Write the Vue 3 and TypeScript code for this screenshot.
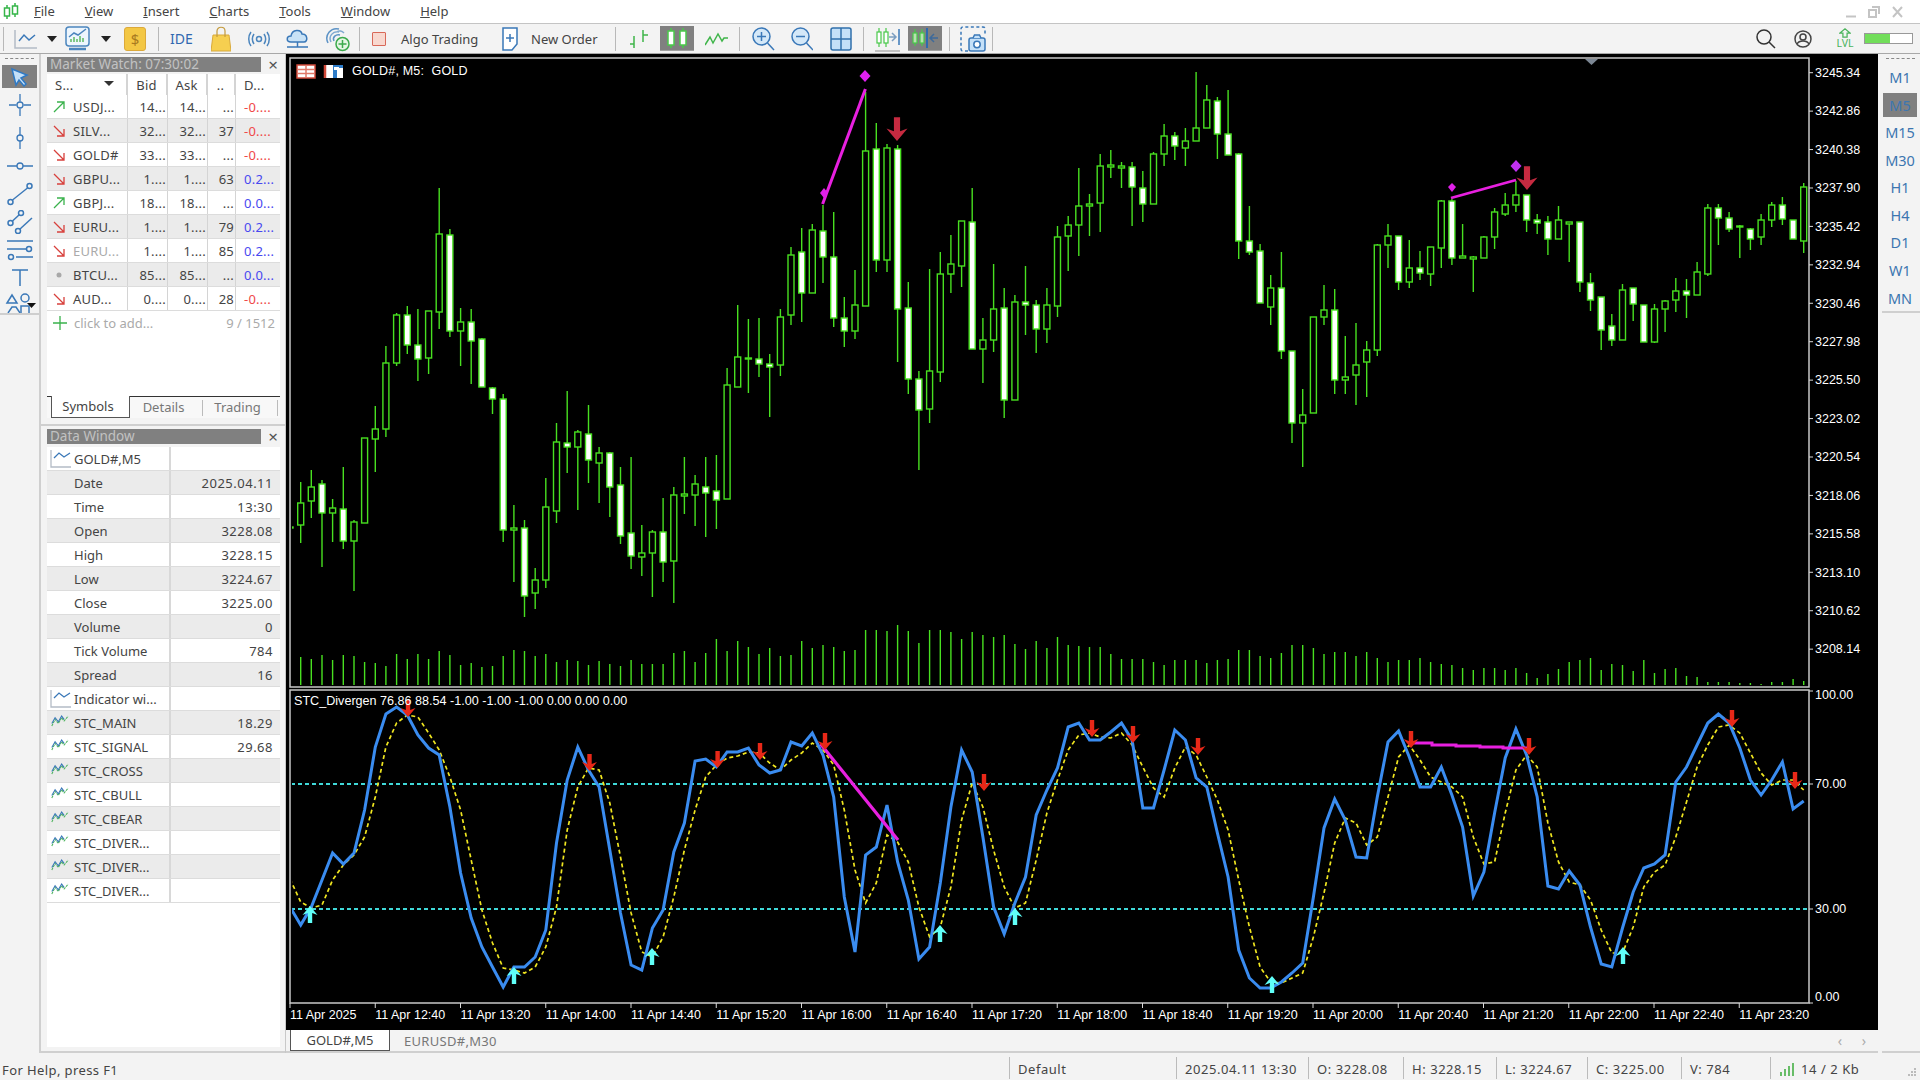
<template>
  <div class="app">
    <header class="menubar">
      <svg class="logo" width="16" height="20" viewBox="0 0 16 20" fill="none" stroke="#35b548" stroke-width="1.5">
        <path d="M4 3V17M12 1V15" />
        <rect x="1.5" y="6" width="5" height="8" fill="#fff" />
        <rect x="9.5" y="4" width="5" height="8" fill="#fff" />
      </svg>
      <nav class="menu">
        <span v-for="m in menu" :key="m.rest"><u>{{ m.key }}</u>{{ m.rest }}</span>
      </nav>
      <div class="winctl">
        <svg width="70" height="20" viewBox="0 0 70 20" fill="none" stroke="#c4c4c4" stroke-width="2">
          <path d="M2 14.5H12" />
          <rect x="25" y="8" width="7" height="7" />
          <path d="M28 5H35V12" />
          <path d="M49 5L58 15M58 5L49 15" />
        </svg>
      </div>
    </header>

    <div class="toolbar">
      <i class="sep m3"></i>
      <svg class="m10" width="23" height="24" viewBox="0 0 23 24" fill="none">
        <path d="M1 3V21H23" stroke="#b4bcc6" stroke-width="1.5" />
        <path d="M5 14L10 8L15 13L21 8" stroke="#3a78b8" stroke-width="1.5" />
      </svg>
      <svg class="m10" width="10" height="6" viewBox="0 0 10 6"><path d="M0 0H10L5 6Z" fill="#222" /></svg>
      <svg class="m8" width="25" height="26" viewBox="0 0 25 26" fill="none">
        <rect x="1" y="1" width="23" height="19" rx="3" fill="#eef6fd" stroke="#4c86be" stroke-width="1.5" />
        <path d="M6 16V13M9 16V11M12 16V13M15 16V10M18 16V12" stroke="#5dbb63" stroke-width="1.5" />
        <path d="M4 11L9 7L13 9L21 3" stroke="#4c86be" stroke-width="1.5" />
        <path d="M4 23H21" stroke="#4c86be" stroke-width="2.5" />
      </svg>
      <svg class="m11" width="10" height="6" viewBox="0 0 10 6"><path d="M0 0H10L5 6Z" fill="#222" /></svg>
      <span class="dollar m13">$</span>
      <i class="sep m12"></i>
      <span class="ide m11">IDE</span>
      <svg class="m18" width="20" height="26" viewBox="0 0 20 26" fill="none">
        <path d="M2 9H18L20 25H0Z" fill="#f6cf50" stroke="#d8a93a" />
        <path d="M6 11V5C6 0 14 0 14 5V11" stroke="#c49a3c" stroke-width="1.200" />
      </svg>
      <svg class="m17" width="22" height="16" viewBox="0 0 22 16" fill="none" stroke="#4c86be" stroke-width="1.5">
        <circle cx="11" cy="8" r="2.5" />
        <path d="M6 3C4 6 4 10 6 13M16 3C18 6 18 10 16 13M3 1C0 5 0 11 3 15M19 1C22 5 22 11 19 15" />
      </svg>
      <svg class="m16" width="23" height="24" viewBox="0 0 23 24" fill="none">
        <path d="M5 15C0 15 0 9 5 9C6 2 15 2 16 7C22 7 22 15 18 15Z" fill="#c8e2f6" stroke="#3a78b8" stroke-width="1.5" />
        <path d="M11.500 15V20M1 20H22" stroke="#3a78b8" stroke-width="1.5" />
      </svg>
      <svg class="m16" width="25" height="26" viewBox="0 0 25 26" fill="none">
        <path d="M3 17C-1 9 6 1 14 3" stroke="#5d93c6" stroke-width="1.5" />
        <path d="M6 16C3 10 8 5 14 6M19 7C17 5 14 4 12 6" stroke="#7fa9d0" stroke-width="1.5" />
        <path d="M9 15C7 11 11 8 15 9" stroke="#5d93c6" stroke-width="1.5" />
        <circle cx="17.500" cy="18" r="6.500" fill="#e4f6e4" stroke="#3caa4c" stroke-width="1.5" />
        <path d="M17.500 14V22M13.500 18H21.500" stroke="#3caa4c" stroke-width="1.5" />
      </svg>
      <i class="sep m9"></i>
      <span class="algo-box m12"></span>
      <span class="tb-text algo m15">Algo Trading</span>
      <svg class="m21" width="18" height="24" viewBox="0 0 18 24" fill="none">
        <path d="M2 1H16V17L11 23H2Z" fill="#fff" stroke="#3a78b8" stroke-width="1.5" />
        <path d="M9 7V15M5 11H13" stroke="#3a78b8" stroke-width="1.5" />
      </svg>
      <span class="tb-text order m12">New Order</span>
      <i class="sep m15"></i>
      <svg class="m12" width="22" height="24" viewBox="0 0 22 24" fill="none" stroke="#3fb54a" stroke-width="1.500">
        <path d="M6 9V21M2 17H6M15 3V15M15 8H20" />
      </svg>
      <span class="tb-active m10">
        <svg width="26" height="24" viewBox="0 0 26 24" fill="#fff" stroke="#49c94a" stroke-width="1.500">
          <path d="M7 2V22M19 2V22" />
          <rect x="4" y="5" width="6" height="14" />
          <rect x="16" y="5" width="6" height="14" />
        </svg>
      </span>
      <svg class="m11" width="23" height="14" viewBox="0 0 23 14" fill="none" stroke="#3fb54a" stroke-width="1.500">
        <path d="M0 13L5 5L8 11L13 2L17 9L19 6H23" />
      </svg>
      <i class="sep m11"></i>
      <svg class="m12" width="23" height="24" viewBox="0 0 23 24" fill="none" stroke="#3a78b8" stroke-width="1.500">
        <circle cx="9.500" cy="9.500" r="8.500" fill="#d4e8f8" />
        <path d="M15.500 16L22 23" />
        <path d="M9.500 5V14M5 9.500H14" />
      </svg>
      <svg class="m16" width="22" height="24" viewBox="0 0 22 24" fill="none" stroke="#3a78b8" stroke-width="1.500">
        <circle cx="9.500" cy="9.500" r="8.500" fill="#d4e8f8" />
        <path d="M15.500 16L22 23" />
        <path d="M5 9.500H14" />
      </svg>
      <svg class="m17" width="22" height="24" viewBox="0 0 22 24" fill="none">
        <rect x="1" y="1" width="20" height="22" rx="2" fill="#c4e0f8" stroke="#3070ac" stroke-width="1.500" />
        <path d="M11 1V23M1 12H21" stroke="#3070ac" stroke-width="1.500" />
      </svg>
      <i class="sep m11"></i>
      <svg class="m11" width="25" height="26" viewBox="0 0 25 26" fill="none">
        <path d="M4 2V21M11 2V21" stroke="#49c94a" stroke-width="1.200" />
        <rect x="2" y="6" width="4" height="11" fill="#fff" stroke="#49c94a" stroke-width="1.200" />
        <rect x="9" y="6" width="4" height="11" fill="#fff" stroke="#49c94a" stroke-width="1.200" />
        <path d="M14 11H21M17 7L21 11L17 15" stroke="#7c9ec0" stroke-width="1.500" />
        <path d="M24 3V19" stroke="#3a78b8" stroke-width="1.500" />
        <path d="M0 25H25" stroke="#b0b0b0" stroke-width="1.500" />
      </svg>
      <span class="tb-active m8">
        <svg width="26" height="22" viewBox="0 0 26 22" fill="none">
          <path d="M3 2V19M10 2V19" stroke="#49c94a" stroke-width="1.200" />
          <rect x="1" y="6" width="4" height="10" fill="#b8e0b0" stroke="#49c94a" stroke-width="1.200" />
          <rect x="8" y="6" width="4" height="10" fill="#b8e0b0" stroke="#49c94a" stroke-width="1.200" />
          <path d="M15 1V21" stroke="#2e6ab0" stroke-width="2" />
          <path d="M26 11H18M22 7L18 11L22 15" stroke="#3e6a9a" stroke-width="1.500" />
        </svg>
      </span>
      <i class="sep m7"></i>
      <svg class="m10" width="26" height="26" viewBox="0 0 26 26" fill="none">
        <path d="M8 25H3Q1 25 1 23V3Q1 1 3 1H23Q25 1 25 3V8" stroke="#3a78b8" stroke-width="1.500" stroke-dasharray="3 2.500" />
        <rect x="9" y="12" width="16" height="13" rx="2" fill="#c4e0f8" stroke="#3a78b8" stroke-width="1.500" />
        <path d="M13 12L14.500 9H19.500L21 12" fill="#c4e0f8" stroke="#3a78b8" stroke-width="1.500" />
        <circle cx="17" cy="18.500" r="3.200" fill="#fff" stroke="#3a78b8" stroke-width="1.500" />
      </svg>
      <i class="sep m6"></i>

      <div class="tb-right">
        <svg class="tb-search" width="22" height="20" viewBox="0 0 22 20" fill="none" stroke="#333" stroke-width="1.500">
          <circle cx="9" cy="8" r="7" />
          <path d="M14 13L20 19" />
        </svg>
        <svg class="m14" width="20" height="18" viewBox="0 0 20 18" fill="none" stroke="#444" stroke-width="1.500">
          <circle cx="10" cy="9" r="8" />
          <circle cx="10" cy="7" r="3" />
          <path d="M4 14C6 10 14 10 16 14" />
        </svg>
        <div class="lvl">
          <svg width="12" height="10" viewBox="0 0 14 12" fill="none" stroke="#4cb45c" stroke-width="1.500">
            <path d="M1 6L7 1L13 6H9.500V11H4.500V6Z" />
          </svg>
          <span>LVL</span>
        </div>
        <div class="meter m10"><div class="meter-fill"></div></div>
      </div>
    </div>

    <main class="main">
      <aside class="left-tools">
        <div class="grip"></div>
        <div class="lt-active">
          <svg width="20" height="20" viewBox="0 0 20 20"><path d="M2 2L17 8L11 11L16 17L14 19L9 13L6 18Z" fill="#c4e0f8" stroke="#2f79c4" stroke-width="1.500" /></svg>
        </div>
        <div class="lt-icons">
          <svg class="lt-first" width="24" height="24" viewBox="0 0 24 24" fill="none" stroke="#3a78b8" stroke-width="1.300"><path d="M12 1V8.500M12 15.500V23M1 12H8.500M15.500 12H23" /><circle cx="12" cy="12" r="3" /></svg>
          <svg width="24" height="24" viewBox="0 0 24 24" fill="none" stroke="#3a78b8" stroke-width="1.300"><path d="M12 1V9M12 15V23" /><circle cx="12" cy="12" r="3" /></svg>
          <svg width="26" height="24" viewBox="0 0 26 24" fill="none" stroke="#3a78b8" stroke-width="1.300"><path d="M0 12H10M16 12H26" /><circle cx="13" cy="12" r="3" /></svg>
          <svg width="26" height="24" viewBox="0 0 26 24" fill="none" stroke="#3a78b8" stroke-width="1.500"><circle cx="3.500" cy="20" r="2.500" /><circle cx="22.500" cy="4" r="2.500" /><path d="M5.500 18L20.500 6" /></svg>
          <svg width="26" height="24" viewBox="0 0 26 24" fill="none" stroke="#3a78b8" stroke-width="1.500"><circle cx="3.500" cy="13" r="2.500" /><circle cx="14" cy="3" r="2.500" /><path d="M5.500 11L12 5" /><circle cx="11" cy="21" r="2.500" /><path d="M13 19L25 8" /></svg>
          <svg width="26" height="24" viewBox="0 0 26 24" fill="none" stroke="#3a78b8" stroke-width="1.500"><path d="M0 3H26M0 11H19M9 19H26" /><circle cx="22" cy="11" r="2.500" /><circle cx="4" cy="19" r="2.500" /></svg>
          <svg width="20" height="24" viewBox="0 0 20 24" fill="none" stroke="#3a78b8" stroke-width="1.500"><path d="M2 4H18M10 4V20" /></svg>
          <svg class="shapes" width="34" height="21" viewBox="0 0 34 21" fill="none" stroke="#3a78b8" stroke-width="1.500"><path d="M4 11L9 3L14 11Z" /><circle cx="22" cy="6" r="4" /><path d="M5 21L9 15L13 15L17 21" /><rect x="18" y="14" width="8" height="9" /><path d="M24 11H33L28.500 16Z" fill="#111" stroke="none" /></svg>
        </div>
        <div class="lt-rule"></div>
      </aside>

      <section class="panels">
        <div class="panel market">
          <div class="titlebar">
            <span class="title">Market Watch: 07:30:02</span>
            <span class="close">×</span>
          </div>
          <div class="mw-body">
            <div class="mw-row mw-head">
              <span class="c-sym head-sym">S...<em class="sort"></em></span>
              <span class="c-num c-center">Bid</span>
              <span class="c-num c-center">Ask</span>
              <span class="c-num c-center">..</span>
              <span class="c-chg">D...</span>
            </div>
            <div v-for="(q, i) in quotes" :key="i" class="mw-row" :class="{ alt: i % 2 === 1 }">
              <span class="c-sym" :class="{ dim: q.dim }">
                <svg v-if="q.dir === 'up'" width="12" height="12" viewBox="0 0 12 12" fill="none" stroke="#3ab24c" stroke-width="1.300"><path d="M1 11L11 1M4 1H11V8" /></svg>
                <svg v-else-if="q.dir === 'down'" width="12" height="12" viewBox="0 0 12 12" fill="none" stroke="#d8403c" stroke-width="1.300"><path d="M1 1L11 11M4 11H11V4" /></svg>
                <svg v-else width="12" height="12" viewBox="0 0 12 12"><circle cx="6" cy="6" r="2.500" fill="#a8a8a8" /></svg>
                <b>{{ q.sym }}</b>
              </span>
              <span class="c-num">{{ q.bid }}</span>
              <span class="c-num">{{ q.ask }}</span>
              <span class="c-num">{{ q.spread }}</span>
              <span class="c-chg" :class="q.neg ? 'neg' : 'pos'">{{ q.chg }}</span>
            </div>
            <div class="mw-add">
              <svg width="14" height="14" viewBox="0 0 14 14" fill="none" stroke="#3ab24c" stroke-width="1.300"><path d="M7 0V14M0 7H14" /></svg>
              <span class="add-text">click to add...</span>
              <span class="add-count">9 / 1512</span>
            </div>
            <div class="mw-tabs">
              <span class="mw-tab on">Symbols</span>
              <span class="mw-tab t-details">Details</span>
              <span class="mw-tab t-trading">Trading</span>
            </div>
          </div>
        </div>

        <div class="panel data">
          <div class="titlebar">
            <span class="title">Data Window</span>
            <span class="close">×</span>
          </div>
          <div class="dw-body">
            <div v-for="(r, i) in dataRows" :key="i" class="dw-row" :class="{ alt: i % 2 === 1 }">
              <span class="dw-name">
                <svg v-if="r.icon === 'chart'" class="dw-ic" width="22" height="20" viewBox="0 0 22 20" fill="none">
                  <path d="M1 1V18H21" stroke="#b4bcc6" stroke-width="1.300" />
                  <path d="M4 9L9 4L14 8L20 4" stroke="#3a78b8" stroke-width="1.300" />
                </svg>
                <svg v-else-if="r.icon === 'ind'" class="dw-ic dw-ind" width="18" height="14" viewBox="0 0 22 16" fill="none" stroke-width="1.300">
                  <path d="M1 14L5 6L9 11L13 4L16 8L21 2" stroke="#4cb45c" stroke-dasharray="3 1" />
                  <path d="M1 11L5 4L9 9L13 2L16 6" stroke="#3a78b8" />
                </svg>
                <b>{{ r.name }}</b>
              </span>
              <span class="dw-val">{{ r.value }}</span>
            </div>
          </div>
        </div>
      </section>

      <section class="chart-col">
        <div class="chart">
          <svg class="chart-svg" width="1592" height="976" viewBox="286 54 1592 976">
            <defs>
              <clipPath id="plot-main"><rect x="292" y="60" width="1516" height="626" /></clipPath>
              <clipPath id="plot-sub"><rect x="292" y="692" width="1516" height="310" /></clipPath>
            </defs>

            <rect x="290" y="58" width="1519" height="629" fill="none" stroke="#c8c8c8" stroke-width="1.500" />
            <rect x="290" y="690" width="1519" height="313" fill="none" stroke="#c8c8c8" stroke-width="1.500" />

            <!-- main window: volumes, candles -->
            <g clip-path="url(#plot-main)">
              <path :d="volumePath" stroke="#48e020" stroke-width="1.400" fill="none" />
              <g v-for="c in candles" :key="c.x">
                <path :d="`M${c.x} ${c.h}V${c.l}`" stroke="#48e020" stroke-width="1.400" />
                <rect :x="c.x - 3" :y="c.t" width="6" :height="Math.max(c.b - c.t, 1)" :fill="c.fill" stroke="#48e020" stroke-width="1.400" />
              </g>
            </g>
            <path d="M822.600 204L865.400 89" stroke="#e820e0" stroke-width="3" />
            <path d="M1451 198L1516 180" stroke="#e820e0" stroke-width="2.800" />
            <path d="M865 70L870.500 76L865 82L859.500 76Z" fill="#e020f0" />
            <path d="M824 188L828 193L824 198L820 193Z" fill="#e020e8" />
            <path d="M1516 160L1521.500 166L1516 172L1510.500 166Z" fill="#c030f0" />
            <path d="M1452 183L1456 187L1452 192L1448 187Z" fill="#e020e8" />
            <polygon :points="arrow(897, 141, -1, 1.400)" fill="#c62a40" />
            <polygon :points="arrow(1527, 190, -1, 1.400)" fill="#c62a40" />
            <path d="M1585 59H1598L1591.500 65Z" fill="#7c8794" />

            <rect x="297" y="65" width="18" height="13" fill="#fff" stroke="#d04838" stroke-width="1.500" />
            <path d="M297 69.500H315M297 73.500H315M306 65V78" stroke="#e07868" stroke-width="1.500" />
            <rect x="325" y="65" width="18" height="13" fill="#2e7cc8" />
            <path d="M325 65H333V78H325ZM337 68H343V78H337Z" fill="#fff" />
            <path d="M325 65V78" stroke="#d04838" stroke-width="2.500" />
            <rect x="334" y="67" width="5" height="3" fill="#fff" />
            <text x="352" y="75" class="chart-txt head">GOLD#, M5:&nbsp; GOLD</text>

            <g v-for="(p, i) in prices" :key="p">
              <path :d="`M1809 ${72.700 + i * 38.430}H1813`" stroke="#d8d8d8" />
              <text x="1815" :y="77 + i * 38.430" class="chart-txt">{{ p }}</text>
            </g>

            <!-- indicator window -->
            <g clip-path="url(#plot-sub)">
              <path d="M291 784H1809M291 909H1809" stroke="#3fd8d8" stroke-width="2" stroke-dasharray="4 3" />
              <polyline :points="signalPts" fill="none" stroke="#f0e620" stroke-width="1.700" stroke-dasharray="4 3" />
              <polyline :points="mainPts" fill="none" stroke="#3a8cf0" stroke-width="3" />
            </g>
            <path d="M820.600 744L898 840" stroke="#e820e0" stroke-width="3.200" />
            <path d="M1408 743H1432V745H1456V746H1480V747H1503V748H1527" stroke="#e820e0" stroke-width="3" fill="none" />
            <polygon v-for="a in downArrows" :key="a[0]" :points="arrow(a[0], a[1], -1, 1)" fill="#e82818" />
            <polygon v-for="a in upArrows" :key="a[0]" :points="arrow(a[0], a[1], 1, 1)" fill="#60fff8" />

            <text x="294" y="705" class="chart-txt sub-name">STC_Divergen 76.86 88.54 -1.00 -1.00 -1.00 0.00 0.00 0.00</text>
            <g v-for="t in subTicks" :key="t.label">
              <path :d="`M1809 ${t.tick}H1813`" stroke="#d8d8d8" />
              <text x="1815" :y="t.y" class="chart-txt">{{ t.label }}</text>
            </g>

            <g v-for="(l, i) in timeLabels" :key="l">
              <path :d="`M${290 + i * 85.250} 1003V1008`" stroke="#d8d8d8" />
              <text :x="290 + i * 85.250" y="1019" class="chart-txt">{{ l }}</text>
            </g>
          </svg>
        </div>
        <div class="chart-tabs">
          <span class="c-tab on">GOLD#,M5</span>
          <span class="c-tab c-tab-next">EURUSD#,M30</span>
          <span class="c-scroll">‹</span>
          <span class="c-scroll c-scroll-r">›</span>
        </div>
      </section>

      <aside class="right-tools">
        <div class="grip"></div>
        <span v-for="p in periods" :key="p" class="period" :class="{ on: p === 'M5' }">{{ p }}</span>
        <div class="rt-fill"></div>
      </aside>
    </main>

    <footer class="statusbar">
      <span class="st-help">For Help, press F1</span>
      <span class="st st-default">Default</span>
      <span class="st st-time">2025.04.11 13:30</span>
      <span class="st st-o">O: 3228.08</span>
      <span class="st st-h">H: 3228.15</span>
      <span class="st st-l">L: 3224.67</span>
      <span class="st st-c">C: 3225.00</span>
      <span class="st st-v">V: 784</span>
      <span class="st st-net">
        <svg width="18" height="16" viewBox="0 0 18 16" fill="none" stroke="#45b045" stroke-width="1.600">
          <path d="M2 15V11M6 15V8M10 15V5M14 15V2" />
        </svg>
        14 / 2 Kb
      </span>
      <svg class="st-grip" width="10" height="10" viewBox="0 0 10 10" fill="#bbb">
        <rect x="7" y="1" width="2" height="2" /><rect x="4" y="4" width="2" height="2" /><rect x="7" y="4" width="2" height="2" />
        <rect x="1" y="7" width="2" height="2" /><rect x="4" y="7" width="2" height="2" /><rect x="7" y="7" width="2" height="2" />
      </svg>
    </footer>
  </div>
</template>

<script setup lang="ts">
import { computed } from 'vue'

const menu = [
  { key: 'F', rest: 'ile' },
  { key: 'V', rest: 'iew' },
  { key: 'I', rest: 'nsert' },
  { key: 'C', rest: 'harts' },
  { key: 'T', rest: 'ools' },
  { key: 'W', rest: 'indow' },
  { key: 'H', rest: 'elp' }
]

interface Quote {
  dir: 'up' | 'down' | 'none'
  sym: string
  bid: string
  ask: string
  spread: string
  chg: string
  neg: boolean
  dim?: boolean
}

const quotes: Quote[] = [
  { dir: 'up', sym: 'USDJ...', bid: '14...', ask: '14...', spread: '...', chg: '-0....', neg: true },
  { dir: 'down', sym: 'SILV...', bid: '32...', ask: '32...', spread: '37', chg: '-0....', neg: true },
  { dir: 'down', sym: 'GOLD#', bid: '33...', ask: '33...', spread: '...', chg: '-0....', neg: true },
  { dir: 'down', sym: 'GBPU...', bid: '1....', ask: '1....', spread: '63', chg: '0.2...', neg: false },
  { dir: 'up', sym: 'GBPJ...', bid: '18...', ask: '18...', spread: '...', chg: '0.0...', neg: false },
  { dir: 'down', sym: 'EURU...', bid: '1....', ask: '1....', spread: '79', chg: '0.2...', neg: false },
  { dir: 'down', sym: 'EURU...', bid: '1....', ask: '1....', spread: '85', chg: '0.2...', neg: false, dim: true },
  { dir: 'none', sym: 'BTCU...', bid: '85...', ask: '85...', spread: '...', chg: '0.0...', neg: false },
  { dir: 'down', sym: 'AUD...', bid: '0....', ask: '0....', spread: '28', chg: '-0....', neg: true }
]

const dataRows = [
  { name: 'GOLD#,M5', value: '', icon: 'chart' },
  { name: 'Date', value: '2025.04.11' },
  { name: 'Time', value: '13:30' },
  { name: 'Open', value: '3228.08' },
  { name: 'High', value: '3228.15' },
  { name: 'Low', value: '3224.67' },
  { name: 'Close', value: '3225.00' },
  { name: 'Volume', value: '0' },
  { name: 'Tick Volume', value: '784' },
  { name: 'Spread', value: '16' },
  { name: 'Indicator wi...', value: '', icon: 'chart' },
  { name: 'STC_MAIN', value: '18.29', icon: 'ind' },
  { name: 'STC_SIGNAL', value: '29.68', icon: 'ind' },
  { name: 'STC_CROSS', value: '', icon: 'ind' },
  { name: 'STC_CBULL', value: '', icon: 'ind' },
  { name: 'STC_CBEAR', value: '', icon: 'ind' },
  { name: 'STC_DIVER...', value: '', icon: 'ind' },
  { name: 'STC_DIVER...', value: '', icon: 'ind' },
  { name: 'STC_DIVER...', value: '', icon: 'ind' }
]

const periods = ['M1', 'M5', 'M15', 'M30', 'H1', 'H4', 'D1', 'W1', 'MN']

const prices = [
  '3245.34', '3242.86', '3240.38', '3237.90', '3235.42', '3232.94', '3230.46', '3227.98',
  '3225.50', '3223.02', '3220.54', '3218.06', '3215.58', '3213.10', '3210.62', '3208.14'
]

const subTicks = [
  { label: '100.00', tick: 691, y: 699 },
  { label: '70.00', tick: 784, y: 788 },
  { label: '30.00', tick: 909, y: 913 },
  { label: '0.00', tick: 1003, y: 1001 }
]

const timeLabels = [
  '11 Apr 2025', '11 Apr 12:40', '11 Apr 13:20', '11 Apr 14:00', '11 Apr 14:40', '11 Apr 15:20',
  '11 Apr 16:00', '11 Apr 16:40', '11 Apr 17:20', '11 Apr 18:00', '11 Apr 18:40', '11 Apr 19:20',
  '11 Apr 20:00', '11 Apr 20:40', '11 Apr 21:20', '11 Apr 22:00', '11 Apr 22:40', '11 Apr 23:20'
]

const BAR = 10.66
const barX = (i: number) => 290 + BAR * i

// screen y of high, body top, body bottom, low; 1 = white body (down bar)
const ohlc: number[][] = [
  [527, 527, 528, 530, 0], [482, 503, 525, 543, 0], [470, 487, 501, 518, 0], [480, 484, 513, 567, 1], [499, 508, 513, 542, 0],
  [467, 509, 541, 549, 1], [520, 522, 541, 591, 0], [438, 438, 523, 523, 0], [406, 429, 439, 472, 0], [346, 363, 429, 437, 0],
  [313, 315, 363, 366, 0], [306, 315, 345, 354, 1], [309, 345, 359, 381, 1], [311, 311, 358, 374, 0], [188, 234, 312, 329, 0],
  [229, 235, 331, 337, 1], [308, 322, 331, 366, 0], [309, 322, 341, 384, 1], [338, 339, 387, 387, 1], [387, 388, 399, 414, 1],
  [394, 399, 530, 542, 1], [505, 528, 530, 582, 0], [520, 528, 596, 617, 1], [568, 580, 593, 609, 0], [478, 507, 580, 588, 0],
  [423, 442, 511, 523, 0], [391, 443, 447, 473, 1], [430, 432, 447, 510, 0], [405, 434, 460, 483, 1], [447, 453, 463, 503, 0],
  [452, 453, 487, 517, 1], [467, 485, 536, 544, 1], [457, 533, 556, 569, 1], [525, 553, 557, 576, 0], [530, 532, 553, 597, 0],
  [498, 532, 562, 582, 1], [487, 495, 561, 603, 0], [457, 494, 496, 514, 0], [475, 484, 495, 526, 0], [457, 487, 493, 537, 1],
  [455, 491, 500, 529, 1], [368, 385, 499, 499, 0], [305, 357, 387, 387, 0], [319, 358, 359, 393, 0], [318, 359, 364, 377, 1],
  [354, 364, 367, 417, 1], [309, 317, 365, 376, 0], [247, 255, 315, 325, 0], [228, 252, 293, 322, 1], [224, 230, 293, 293, 0],
  [205, 231, 257, 283, 1], [212, 257, 318, 327, 1], [297, 318, 331, 347, 1], [270, 305, 331, 339, 0], [92, 151, 306, 306, 0],
  [123, 149, 260, 272, 1], [144, 148, 260, 272, 0], [145, 149, 309, 362, 1], [282, 308, 379, 394, 1], [371, 379, 410, 470, 1],
  [269, 371, 409, 423, 0], [252, 274, 372, 382, 0], [235, 264, 274, 293, 0], [221, 221, 266, 287, 0], [188, 222, 349, 349, 1],
  [318, 340, 349, 383, 0], [264, 309, 340, 352, 0], [288, 308, 400, 418, 1], [295, 302, 400, 400, 0], [266, 302, 305, 335, 1],
  [300, 305, 329, 353, 1], [288, 305, 329, 343, 0], [226, 237, 306, 317, 0], [216, 225, 236, 271, 0], [168, 206, 225, 256, 0],
  [194, 204, 206, 236, 0], [154, 166, 203, 232, 0], [150, 165, 167, 178, 0], [162, 166, 168, 188, 0], [162, 167, 187, 226, 1],
  [171, 188, 204, 222, 1], [152, 154, 204, 204, 0], [124, 136, 154, 166, 0], [132, 136, 146, 160, 1], [128, 141, 148, 166, 0],
  [72, 128, 141, 141, 0], [85, 100, 128, 128, 0], [97, 101, 134, 159, 1], [90, 134, 155, 155, 1], [153, 154, 241, 259, 1],
  [206, 241, 252, 255, 1], [244, 251, 303, 303, 1], [275, 288, 307, 325, 0], [252, 288, 351, 359, 1], [351, 351, 423, 443, 1],
  [389, 415, 423, 467, 0], [317, 317, 413, 413, 0], [285, 310, 317, 325, 0], [289, 310, 380, 394, 1], [336, 377, 380, 394, 0],
  [323, 365, 375, 405, 0], [341, 350, 362, 397, 0], [244, 245, 350, 356, 0], [224, 236, 245, 268, 0], [236, 236, 282, 290, 1],
  [240, 268, 282, 288, 0], [251, 268, 273, 280, 1], [247, 247, 274, 286, 0], [200, 201, 248, 268, 0], [199, 201, 258, 265, 1],
  [224, 256, 258, 258, 0], [256, 257, 259, 292, 0], [236, 237, 258, 258, 0], [208, 212, 237, 249, 0], [193, 205, 214, 216, 0],
  [181, 195, 205, 212, 0], [195, 195, 220, 232, 1], [214, 220, 223, 234, 1], [216, 222, 239, 255, 1], [206, 220, 239, 239, 0],
  [222, 222, 224, 262, 0], [222, 222, 282, 292, 1], [273, 283, 300, 311, 1], [297, 297, 330, 350, 1], [314, 326, 340, 346, 1],
  [284, 290, 340, 340, 0], [288, 288, 304, 321, 1], [305, 305, 342, 342, 1], [304, 309, 342, 343, 0], [300, 301, 309, 332, 0],
  [278, 291, 300, 312, 0], [279, 291, 295, 318, 1], [262, 272, 295, 295, 0], [204, 208, 274, 276, 0], [204, 208, 218, 245, 1],
  [212, 218, 229, 232, 1], [225, 226, 227, 258, 0], [228, 229, 239, 250, 1], [214, 220, 237, 245, 0], [202, 205, 220, 227, 0],
  [197, 205, 219, 225, 1], [220, 220, 239, 239, 1], [183, 187, 241, 253, 0]
]

const candles = ohlc.map((b, i) => ({
  x: +barX(i).toFixed(1),
  h: b[0],
  t: b[1],
  b: b[2],
  l: b[3],
  fill: b[4] ? '#fff' : '#000'
}))

const volumes = [
  28, 26, 30, 25, 30, 29, 23, 22, 19, 31, 26, 31, 26, 34, 30, 20, 22, 18, 19, 29, 35, 34, 29, 31, 23, 25, 24, 20, 24, 21,
  19, 25, 21, 21, 21, 32, 34, 23, 32, 46, 34, 44, 38, 31, 37, 29, 30, 44, 37, 40, 38, 34, 35, 55, 55, 54, 60, 54, 42, 55,
  55, 53, 46, 53, 50, 48, 50, 41, 36, 44, 37, 48, 40, 39, 38, 38, 31, 26, 26, 26, 23, 20, 25, 25, 25, 22, 25, 26, 35, 35,
  29, 27, 32, 40, 40, 37, 31, 33, 33, 29, 33, 27, 23, 25, 25, 27, 23, 21, 20, 17, 15, 17, 17, 15, 17, 12, 7, 11, 16, 23,
  25, 27, 15, 21, 20, 14, 25, 12, 16, 17, 9, 8, 3, 3, 3, 2, 2, 1, 3, 3, 6, 4
]

const volumePath = computed(() =>
  volumes.map((v, i) => `M${barX(i + 1).toFixed(1)} 685V${685 - v}`).join('')
)

const mainLine = [
  907, 925, 907, 880, 853, 864, 853, 810, 747, 714, 707, 715, 735, 748, 755, 807, 873, 918, 947, 967,
  987, 967, 967, 957, 930, 843, 780, 747, 770, 787, 850, 913, 965, 970, 928, 910, 852, 823, 761, 759,
  767, 752, 752, 748, 765, 773, 770, 742, 746, 733, 755, 797, 897, 952, 855, 847, 805, 862, 900, 959,
  947, 883, 807, 750, 772, 837, 907, 934, 903, 877, 815, 790, 768, 727, 723, 740, 740, 732, 723, 740,
  808, 808, 770, 730, 740, 778, 787, 833, 877, 950, 978, 988, 988, 982, 973, 963, 897, 828, 799, 820,
  857, 858, 797, 742, 731, 757, 787, 787, 767, 795, 827, 896, 872, 813, 758, 729, 755, 797, 886, 889,
  871, 885, 927, 964, 967, 928, 892, 868, 864, 855, 782, 767, 745, 723, 714, 723, 748, 780, 795, 780,
  762, 809, 801
]

const signalLine = [
  879, 902, 908, 905, 880, 865, 855, 837, 797, 747, 723, 715, 717, 733, 750, 777, 810, 860, 910, 943,
  968, 970, 973, 967, 947, 907, 830, 787, 768, 770, 803, 857, 913, 952, 957, 937, 897, 850, 810, 777,
  765, 758, 756, 752, 753, 763, 770, 760, 753, 743, 750, 765, 810, 870, 903, 883, 835, 842, 862, 907,
  937, 927, 887, 820, 783, 807, 850, 887, 908, 903, 860, 813, 780, 750, 735, 733, 737, 738, 733, 745,
  767, 788, 797, 768, 747, 755, 777, 800, 830, 880, 927, 967, 982, 983, 978, 973, 937, 893, 843, 818,
  823, 845, 837, 797, 757, 745, 760, 777, 782, 787, 797, 837, 864, 862, 813, 770, 755, 767, 823, 862,
  882, 885, 900, 930, 953, 953, 927, 887, 872, 865, 837, 802, 767, 745, 727, 725, 733, 753, 773, 785,
  780, 780, 790
]

const toPoints = (ys: number[]) => ys.map((y, i) => `${barX(i).toFixed(1)},${y}`).join(' ')
const mainPts = computed(() => toPoints(mainLine))
const signalPts = computed(() => toPoints(signalLine))

const downArrows = [
  [408, 717], [589.5, 771], [717.6, 768], [760, 760], [825, 750], [984, 791], [1092, 737], [1133, 743],
  [1198, 755], [1411, 748], [1529, 755], [1732, 727], [1795, 789]
]

const upArrows = [
  [310, 906], [514, 967], [652, 948], [940, 925], [1015, 908], [1272, 976], [1623, 947]
]

// dir 1 points up with the tip at (x, y), dir -1 points down
function arrow(x: number, y: number, dir: number, s: number): string {
  const p = [[0, 0], [7.5, 9], [2.2, 7], [2.2, 17], [-2.2, 17], [-2.2, 7], [-7.5, 9]]
  return p.map(([dx, dy]) => `${x + dx * s},${y + dy * s * dir}`).join(' ')
}
</script>

<style>
html, body { margin: 0; background: #f3f3f3; }
</style>

<style scoped>
.app {
  width: 1920px;
  height: 1080px;
  display: flex;
  flex-direction: column;
  overflow: hidden;
  background: #f3f3f3;
  color: #444;
  font-family: "Noto Sans", "Liberation Sans", sans-serif;
  font-size: 13px;
}

/* menu */
.menubar {
  height: 23px;
  flex: none;
  display: flex;
  align-items: center;
  background: #fff;
  border-bottom: 1px solid #c4c4c4;
}
.logo { margin-left: 3px; }
.menu { display: flex; margin-left: 15px; gap: 30px; }
.menu span { line-height: 23px; }
.winctl { margin-left: auto; margin-right: 6px; display: flex; }

/* toolbar */
.toolbar {
  height: 29px;
  flex: none;
  display: flex;
  align-items: center;
  background: #f3f3f3;
  border-bottom: 1px solid #a8a8a8;
}
.sep { width: 1px; height: 24px; background: #b8b8b8; flex: none; }
.toolbar svg { flex: none; }
.m3 { margin-left: 3px; }
.m6 { margin-left: 6px; }
.m7 { margin-left: 7px; }
.m8 { margin-left: 8px; }
.m9 { margin-left: 9px; }
.m10 { margin-left: 10px; }
.m11 { margin-left: 11px; }
.m12 { margin-left: 12px; }
.m13 { margin-left: 13px; }
.m14 { margin-left: 14px; }
.m15 { margin-left: 15px; }
.m16 { margin-left: 16px; }
.m17 { margin-left: 17px; }
.m18 { margin-left: 18px; }
.m21 { margin-left: 21px; }
.dollar {
  width: 22px;
  height: 24px;
  box-sizing: border-box;
  background: #f3c744;
  border: 1px solid #dca93a;
  border-radius: 3px;
  text-align: center;
  line-height: 22px;
  font-size: 15px;
  color: #a87a20;
}
.ide { width: 23px; color: #3068b0; font-size: 14px; }
.algo-box {
  width: 14px;
  height: 14px;
  background: #f8d8cf;
  border: 1px solid #d86858;
  box-sizing: border-box;
  border-radius: 1px;
}
.tb-text { white-space: nowrap; }
.algo { width: 79px; }
.order { width: 69px; }
.tb-active {
  width: 34px;
  height: 24px;
  background: #808080;
  display: flex;
  align-items: center;
  justify-content: center;
  border-bottom: 1px solid #a0a0a0;
}
.tb-right { margin-left: auto; display: flex; align-items: center; padding-right: 7px; }
.tb-search { margin-right: 2px; }
.lvl {
  display: flex;
  flex-direction: column;
  align-items: center;
  color: #4cb45c;
  font-size: 10.5px;
  line-height: 11px;
  width: 18px;
  margin-left: 23px;
}
.meter { width: 49px; height: 11px; box-sizing: border-box; border: 1px solid #999; background: #fff; }
.meter-fill { width: 25px; height: 100%; background: #72de5a; }

.main { flex: 1; display: flex; min-height: 0; }

/* drawing tools */
.left-tools {
  width: 39px;
  flex: none;
  border-right: 2px solid #cfcfcf;
  position: relative;
}
.grip {
  height: 0;
  margin: 4px 5px 0;
  border-top: 1px dashed #888;
}
.lt-active {
  margin: 6px 2px 0;
  height: 23px;
  background: #808080;
  display: flex;
  align-items: center;
  justify-content: center;
}
.lt-icons {
  display: flex;
  flex-direction: column;
  align-items: center;
  margin-top: 5px;
  gap: 4px;
}
.lt-icons svg { display: block; flex: none; }
.lt-first { margin-bottom: 5px; }
.shapes { margin-top: -2px; }
.lt-rule { border-top: 2px solid #cfcfcf; }

/* panels */
.panels {
  width: 245px;
  flex: none;
  display: flex;
  flex-direction: column;
  border-right: 1px solid #c8c8c8;
  box-sizing: border-box;
}
.panel { padding: 3px 5px 0 6px; border-bottom: 2px solid #cfcfcf; box-sizing: border-box; }
.market { height: 372px; }
.data { flex: 1; }
.titlebar { display: flex; align-items: center; height: 15px; }
.title {
  width: 215px;
  height: 15px;
  background: #808080;
  color: #c2c2c2;
  font-size: 13.5px;
  line-height: 15px;
  padding-left: 3px;
  box-sizing: border-box;
  white-space: nowrap;
}
.close { margin-left: 5px; width: 14px; text-align: center; font-size: 17px; line-height: 15px; color: #555; }

.mw-body { margin-top: 2px; background: #fff; height: 344px; position: relative; }
.mw-row {
  display: grid;
  grid-template-columns: 81px 40px 40px 28px 44px;
  height: 24px;
  align-items: center;
  border-bottom: 1px solid #dcdcdc;
  box-sizing: border-box;
  letter-spacing: .25px;
}
.mw-row.alt { background: #ebebeb; }
.mw-row > span { border-right: 1px solid #d4d4d4; height: 100%; display: flex; align-items: center; box-sizing: border-box; white-space: nowrap; overflow: hidden; }
.mw-row > span:last-child { border-right: 0; }
.mw-head { height: 21px; border-bottom: 0; }
.mw-head > span { border-right: 2px solid #d4d4d4; }
.head-sym { padding-left: 8px !important; position: relative; }
.sort {
  position: absolute;
  left: 57px;
  top: 7px;
  border-left: 5px solid transparent;
  border-right: 5px solid transparent;
  border-top: 5px solid #333;
}
.c-sym { padding-left: 6px; gap: 8px; }
.c-sym b { font-weight: 400; }
.c-sym svg { flex: none; }
.dim b { color: #aaa; }
.c-num { justify-content: flex-end; padding-right: 1px; }
.c-center { justify-content: center; }
.c-chg { padding-left: 8px; }
.neg { color: #f04848; }
.pos { color: #4848f0; }
.mw-add { display: flex; align-items: center; height: 24px; padding: 0 5px 0 6px; color: #aaa; gap: 7px; }
.add-count { margin-left: auto; }
.mw-tabs {
  position: absolute;
  left: 0;
  right: 0;
  bottom: 0;
  height: 21px;
  border-top: 1px solid #333;
  display: flex;
  background: #f8f8f8;
}
.mw-tab { display: flex; align-items: center; justify-content: center; color: #777; box-sizing: border-box; padding: 0 5px 2px 0; }
.mw-tab.on {
  margin-left: 4px;
  width: 79px;
  margin-top: -1px;
  background: #fff;
  color: #444;
  border: 1px solid #555;
  border-top: 0;
}
.t-details { width: 73px; border-right: 1px solid #bbb; height: 16px; margin-top: 3px; }
.t-trading { width: 75px; border-right: 1px solid #bbb; height: 16px; margin-top: 3px; }

.dw-body { margin-top: 3px; background: #fff; height: 600px; }
.dw-row {
  display: grid;
  grid-template-columns: 124px 108px;
  height: 24px;
  border-bottom: 1px solid #dcdcdc;
  box-sizing: border-box;
  align-items: center;
}
.dw-row.alt { background: #ebebeb; }
.dw-name {
  height: 100%;
  display: flex;
  align-items: center;
  border-right: 2px solid #d8d8d8;
  padding-left: 27px;
  position: relative;
  box-sizing: border-box;
  white-space: nowrap;
}
.dw-name b { font-weight: 400; }
.dw-ic { position: absolute; left: 3px; top: 2px; }
.dw-ind { left: 4px; top: 3px; }
.dw-val { text-align: right; padding-right: 6px; letter-spacing: .5px; }

/* chart */
.chart-col { flex: 1; display: flex; flex-direction: column; min-width: 0; }
.chart { height: 976px; flex: none; background: #000; }
.chart-svg { display: block; }
.chart-txt {
  font-family: "Liberation Sans", sans-serif;
  font-size: 12.5px;
  fill: #fff;
}
.head { letter-spacing: .2px; }
.sub-name { font-size: 12.6px; }
.chart-tabs {
  flex: 1;
  display: flex;
  align-items: stretch;
  position: relative;
  padding-left: 4px;
  border-bottom: 2px solid #cfcfcf;
}
.c-tab { width: 100px; display: flex; align-items: center; justify-content: center; color: #777; flex: none; }
.c-tab.on { color: #444; background: #fff; border: 1px solid #555; border-top: 0; box-sizing: border-box; }
.c-tab-next { justify-content: flex-start; margin-left: 14px; letter-spacing: .3px; white-space: nowrap; }
.c-scroll { position: absolute; right: 36px; top: 1px; color: #aaa; font-size: 14px; }
.c-scroll-r { right: 12px; }

.right-tools {
  width: 42px;
  flex: none;
  display: flex;
  flex-direction: column;
  align-items: stretch;
}
.right-tools .grip { margin: 4px 5px 0 8px; }
.period {
  height: 27.6px;
  flex: none;
  display: flex;
  align-items: center;
  justify-content: center;
  color: #3c76b0;
  font-size: 14.5px;
  margin-left: 5px;
  margin-right: 3px;
}
.period:first-of-type { margin-top: 4px; }
.period.on { background: #808080; height: 24px; margin-top: 2px; margin-bottom: 1.600px; }
.rt-fill { flex: 1; border-top: 2px solid #cfcfcf; border-bottom: 2px solid #cfcfcf; margin-left: 4px; }

/* status */
.statusbar { height: 27px; flex: none; position: relative; background: #f3f3f3; }
.st-help { position: absolute; left: 2px; top: 8px; letter-spacing: .4px; }
.st {
  position: absolute;
  top: 4px;
  height: 22px;
  padding: 2px 0 0 8px;
  box-sizing: border-box;
  border-left: 1px solid #bbb;
  white-space: nowrap;
  display: flex;
  align-items: center;
  gap: 4px;
  letter-spacing: .55px;
}
.st-default { left: 1009px; }
.st-time { left: 1176px; }
.st-o { left: 1308px; }
.st-h { left: 1403px; }
.st-l { left: 1496px; }
.st-c { left: 1587px; }
.st-v { left: 1681px; }
.st-net { left: 1770px; }
.st-grip { position: absolute; right: 3px; bottom: 3px; }
</style>
